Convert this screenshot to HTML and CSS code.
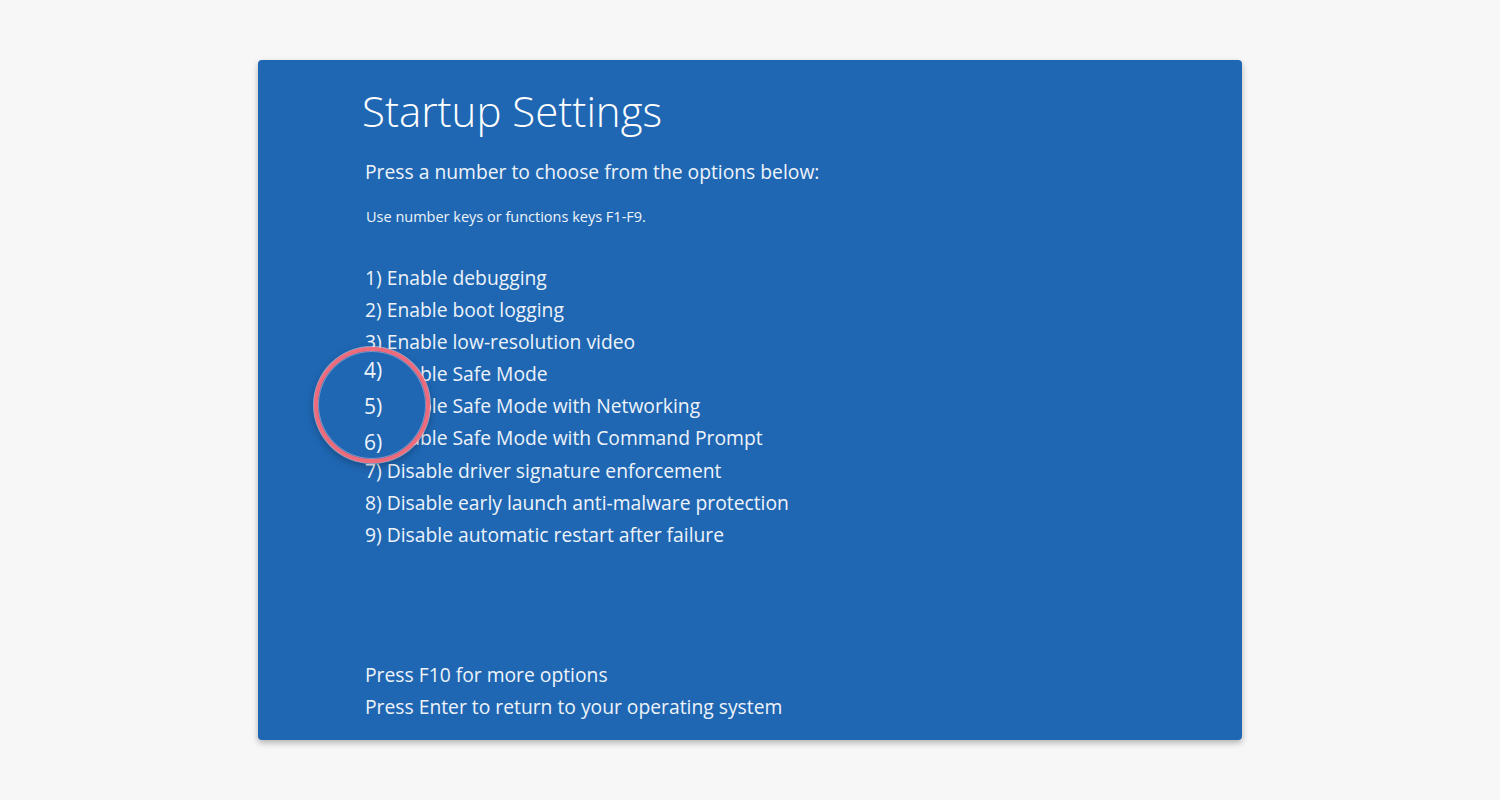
FILE: index.html
```html
<!DOCTYPE html>
<html>
<head>
<meta charset="utf-8">
<link rel="stylesheet" href="styles.css">
</head>
<body>
<div class="page">
  <div class="screen">
    <h1 class="title">Startup Settings</h1>
    <p class="lead">Press a number to choose from the options below:</p>
    <p class="hint">Use number keys or functions keys F1-F9.</p>
    <ol class="options">
      <li>1) Enable debugging</li>
      <li>2) Enable boot logging</li>
      <li>3) Enable low-resolution video</li>
      <li>4) Enable Safe Mode</li>
      <li>5) Enable Safe Mode with Networking</li>
      <li>6) Enable Safe Mode with Command Prompt</li>
      <li>7) Disable driver signature enforcement</li>
      <li>8) Disable early launch anti-malware protection</li>
      <li>9) Disable automatic restart after failure</li>
    </ol>
    <div class="footer">
      <p>Press F10 for more options</p>
      <p>Press Enter to return to your operating system</p>
    </div>
    <div class="lens">
      <span>4)</span>
      <span>5)</span>
      <span>6)</span>
    </div>
  </div>
</div>
</body>
</html>
```
FILE: styles.css
```css
html, body {
  margin: 0;
  padding: 0;
}
body {
  background: #f7f7f8;
  font-family: "Open Sans", "Noto Sans", sans-serif;
}
.page {
  width: 1500px;
  height: 800px;
  display: flex;
  justify-content: center;
  padding-top: 60px;
  box-sizing: border-box;
}
.screen {
  position: relative;
  width: 984px;
  height: 680px;
  background: #1f67b3;
  border-radius: 4px;
  box-shadow: 0 3px 6px rgba(0, 0, 0, 0.28);
  box-sizing: border-box;
  padding: 22px 0 0 107px;
  color: #eef3fa;
  display: flex;
  flex-direction: column;
}
.title {
  margin: 0 0 0 -3px;
  font-weight: 300;
  font-size: 42px;
  line-height: 58px;
  color: #ffffff;
}
.lead {
  margin: 19px 0 0 0;
  font-size: 19.3px;
  line-height: 26px;
  font-weight: 400;
}
.hint {
  margin: 23px 0 0 1px;
  font-size: 14.5px;
  line-height: 18px;
}
.options {
  list-style: none;
  margin: 36px 0 0 0;
  padding: 0;
  font-size: 19.3px;
  line-height: 32.1px;
}
.footer {
  margin-top: auto;
  padding-bottom: 17px;
  font-size: 19.3px;
  line-height: 32px;
}
.footer p {
  margin: 0;
}
.lens {
  position: absolute;
  left: 56px;
  top: 287px;
  width: 116px;
  height: 116px;
  border-radius: 50%;
  border: 4px solid #ef6b7b;
  background: #1f67b3;
  box-shadow: 0 0 0 1px rgba(255, 220, 225, 0.55), inset 0 0 0 1px rgba(255, 220, 225, 0.4), 0 3px 8px rgba(0, 0, 0, 0.3);
  display: flex;
  flex-direction: column;
  align-items: flex-start;
  padding: 1px 0 0 46px;
  box-sizing: border-box;
  font-size: 21px;
  line-height: 36px;
}
```
